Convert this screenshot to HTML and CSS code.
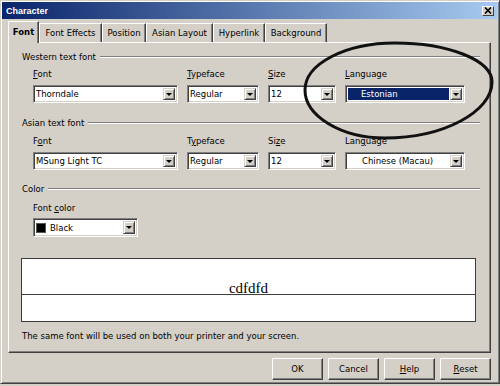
FILE: index.html
```html
<!DOCTYPE html>
<html>
<head>
<meta charset="utf-8">
<link rel="stylesheet" href="styles.css">
</head>
<body>
<div class="window">
  <div class="titlebar">
    <span class="title">Character</span>
    <span class="close"><svg width="8" height="7" viewBox="0 0 8 7"><path d="M1 0.5 L7 6.5 M7 0.5 L1 6.5" stroke="#000" stroke-width="1.6"/></svg></span>
  </div>
  <div class="tabs">
    <div class="tab active t-font">Font</div>
    <div class="tab t-effects">Font Effects</div>
    <div class="tab t-pos">Position</div>
    <div class="tab t-asian">Asian Layout</div>
    <div class="tab t-hyper">Hyperlink</div>
    <div class="tab t-bg">Background</div>
  </div>
  <div class="panel">
    <div class="ghead g-west"><span>Western text font</span><i class="rule"></i></div>
    <div class="row r-west">
      <div class="field w-font"><div class="lbl"><u>F</u>ont</div><div class="combo"><div class="val">Thorndale</div><div class="dd"></div></div></div>
      <div class="field w-type"><div class="lbl"><u>T</u>ypeface</div><div class="combo"><div class="val">Regular</div><div class="dd"></div></div></div>
      <div class="field w-size"><div class="lbl"><u>S</u>ize</div><div class="combo"><div class="val">12</div><div class="dd"></div></div></div>
      <div class="field w-lang"><div class="lbl"><u>L</u>anguage</div><div class="combo"><div class="val sel">Estonian</div><div class="dd"></div></div></div>
    </div>
    <div class="ghead g-asian"><span>Asian text font</span><i class="rule"></i></div>
    <div class="row r-asian">
      <div class="field w-font"><div class="lbl">F<u>o</u>nt</div><div class="combo"><div class="val">MSung Light TC</div><div class="dd"></div></div></div>
      <div class="field w-type"><div class="lbl">T<u>y</u>peface</div><div class="combo"><div class="val">Regular</div><div class="dd"></div></div></div>
      <div class="field w-size"><div class="lbl">Si<u>z</u>e</div><div class="combo"><div class="val">12</div><div class="dd"></div></div></div>
      <div class="field w-lang"><div class="lbl">Lan<u>g</u>uage</div><div class="combo"><div class="val chinese">Chinese (Macau)</div><div class="dd"></div></div></div>
    </div>
    <div class="ghead g-color"><span>Color</span><i class="rule"></i></div>
    <div class="row r-color">
      <div class="field w-color"><div class="lbl">Font <u>c</u>olor</div><div class="combo tall"><div class="val"><i class="swatch"></i>Black</div><div class="dd"></div></div></div>
    </div>
    <div class="preview">
      <div class="sample"><span>cdfdfd</span></div>
    </div>
    <p class="note">The same font will be used on both your printer and your screen.</p>
  </div>
  <div class="buttons">
    <div class="button">OK</div>
    <div class="button">Cancel</div>
    <div class="button"><u>H</u>elp</div>
    <div class="button"><u>R</u>eset</div>
  </div>
</div>
<svg class="ellipse" width="500" height="386" viewBox="0 0 500 386">
  <path d="M305 90 C305 64 345 43 395 43 C448 43 492 60 492 82 C492 112 443 138 385 138 C341 138 305 116 305 90 Z" fill="none" stroke="#111" stroke-width="3"/>
</svg>
</body>
</html>
```

FILE: styles.css
```css
* { box-sizing: border-box; }

body {
  margin: 0;
  width: 500px;
  height: 386px;
  background: #d4d0c8;
  font-family: "DejaVu Sans", sans-serif;
  font-size: 8.5px;
  color: #000;
  overflow: hidden;
  position: relative;
}

.window {
  width: 500px;
  height: 384px;
  border: 1px solid;
  border-color: #d4d0c8 #404040 #404040 #d4d0c8;
  box-shadow: inset 1px 1px #fff, inset -1px -1px #808080;
  padding: 1px 2px 0 1px;
  display: flex;
  flex-direction: column;
}

.titlebar {
  height: 17px;
  flex: none;
  background: linear-gradient(to right, #0a246a, #a6caf0);
  display: flex;
  align-items: center;
  justify-content: space-between;
  padding: 0 3px 0 4px;
}

.title {
  font: bold 9px "Liberation Sans", sans-serif;
  color: #fff;
}

.close {
  width: 12px;
  height: 10px;
  background: #d4d0c8;
  border: 1px solid;
  border-color: #fff #404040 #404040 #fff;
  display: flex;
  align-items: center;
  justify-content: center;
}

.tabs {
  display: flex;
  align-items: flex-end;
  height: 23px;
  flex: none;
  margin-left: 6px;
  position: relative;
  z-index: 1;
}

.tab {
  height: 19px;
  display: flex;
  align-items: center;
  justify-content: center;
  border: 1px solid;
  border-bottom: none;
  border-color: #fff #404040 #fff #fff;
  box-shadow: inset -1px 0 #808080;
  white-space: nowrap;
}

.tab.active {
  height: 22px;
  margin-bottom: -1px;
  font-weight: bold;
  background: #d4d0c8;
  padding-bottom: 1px;
}

.t-font { width: 31px; }
.t-effects { width: 63px; }
.t-pos { width: 44px; }
.t-asian { width: 67px; }
.t-hyper { width: 52px; }
.t-bg { width: 62px; }

.panel {
  margin-left: 6px;
  width: 483px;
  height: 311px;
  flex: none;
  border: 1px solid;
  border-color: #fff #404040 #404040 #fff;
  box-shadow: inset -1px -1px #808080;
  padding: 8px 10px 0 13px;
}

.ghead {
  display: flex;
  align-items: center;
  height: 12px;
  line-height: 12px;
}

.rule {
  flex: 1;
  height: 2px;
  margin-left: 4px;
  border-top: 1px solid #808080;
  border-bottom: 1px solid #fff;
}

.g-asian { margin-top: 14px; }
.g-color { margin-top: 13px; }

.row {
  display: flex;
  gap: 9px;
  padding-left: 11px;
}

.r-west { margin-top: 5px; }
.r-asian { margin-top: 6px; }
.r-color { margin-top: 7px; }

.lbl {
  height: 12px;
  line-height: 12px;
  margin-bottom: 5px;
}

.r-color .lbl { margin-bottom: 4px; }

.w-font { width: 145px; }
.w-type { width: 72px; }
.w-size { width: 68px; }
.w-lang { width: 120px; }
.w-color { width: 105px; }

.combo {
  display: flex;
  height: 18px;
  background: #fff;
  border: 1px solid;
  border-color: #808080 #fff #fff #808080;
  box-shadow: inset 1px 1px #404040, inset -1px -1px #d4d0c8;
  padding: 2px;
}

.combo.tall { height: 19px; }

.val {
  flex: 1;
  display: flex;
  align-items: center;
  white-space: nowrap;
  overflow: hidden;
}

.val.sel {
  background: #0a246a;
  color: #fff;
  padding-left: 13px;
  margin-right: 1px;
}

.val.chinese { padding-left: 14px; }

.swatch {
  width: 10px;
  height: 10px;
  background: #000;
  border: 1px solid #555;
  margin-right: 4px;
}

.dd {
  width: 12px;
  background: #d4d0c8;
  border: 1px solid;
  border-color: #d4d0c8 #404040 #404040 #d4d0c8;
  box-shadow: inset 1px 1px #fff, inset -1px -1px #808080;
  display: flex;
  align-items: center;
  justify-content: center;
}

.dd::after {
  content: "";
  border-left: 3px solid transparent;
  border-right: 3px solid transparent;
  border-top: 3px solid #000;
}

.preview {
  margin-top: 21px;
  margin-left: -1px;
  width: 455px;
  height: 64px;
  border: 1px solid #3c3c3c;
  background: #fff;
}

.sample {
  height: 36px;
  border-bottom: 1px solid #404040;
  display: flex;
  justify-content: center;
  align-items: flex-end;
}

.sample span {
  font: 15px "Liberation Serif", serif;
  line-height: 15px;
  margin-bottom: -2px;
}

.note {
  margin: 8px 0 0;
  height: 12px;
  line-height: 12px;
}

.buttons {
  display: flex;
  justify-content: flex-end;
  gap: 5px;
  margin-top: 5px;
  padding-right: 6px;
}

.button {
  width: 51px;
  height: 22px;
  background: #d4d0c8;
  border: 1px solid;
  border-color: #fff #404040 #404040 #fff;
  box-shadow: inset -1px -1px #808080;
  display: flex;
  align-items: center;
  justify-content: center;
}

.ellipse {
  position: absolute;
  left: 0;
  top: 0;
  pointer-events: none;
}
```
